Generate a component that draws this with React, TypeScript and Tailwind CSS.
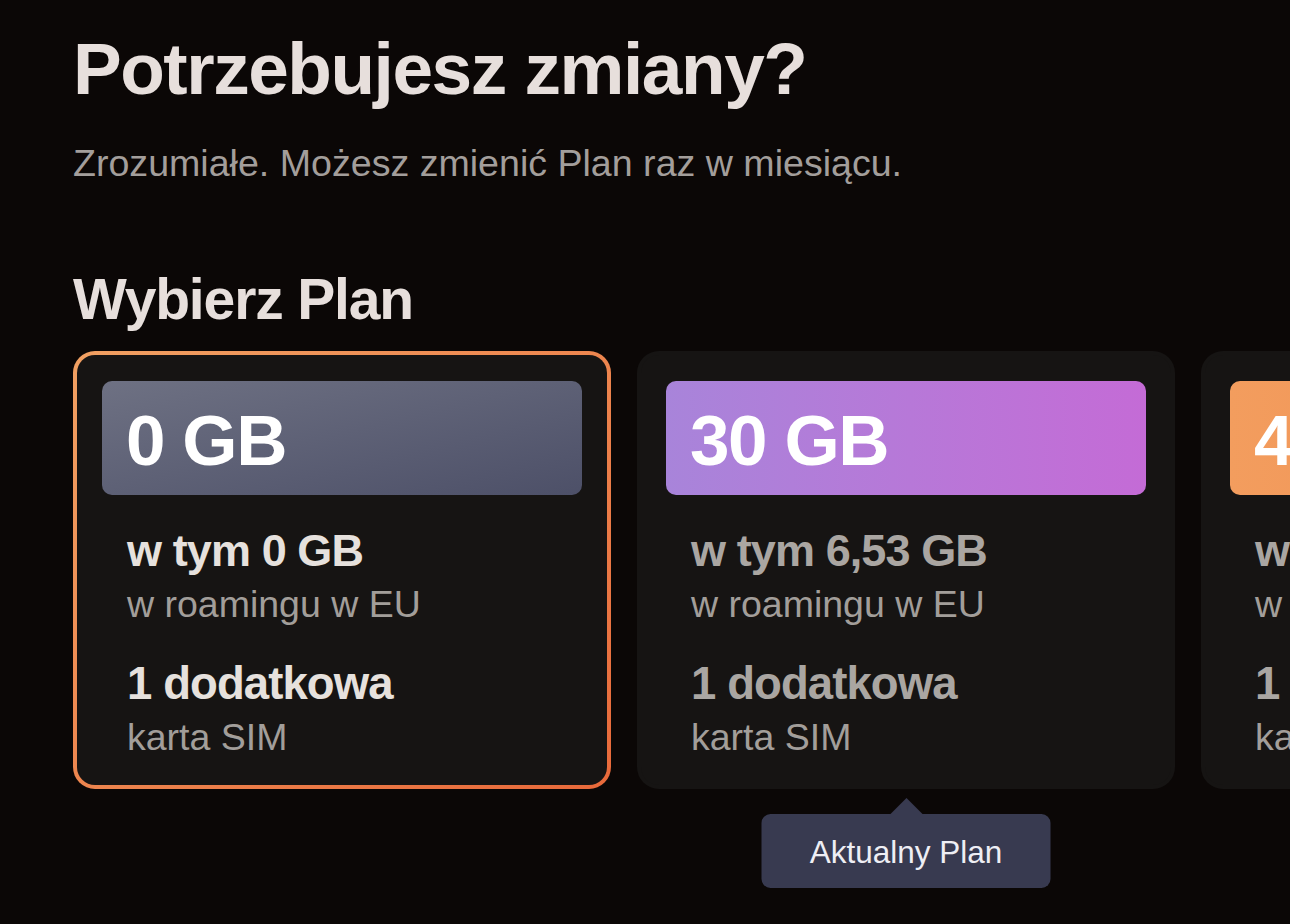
import React from 'react';

type Plan = {
  size: string;
  roaming: string;
  banner: string;
  selected?: boolean;
  current?: boolean;
};

const PLANS: Plan[] = [
  { size: '0 GB', roaming: 'w tym 0 GB', banner: 'bg-gradient-to-br from-[#6e7183] to-[#4d5068]', selected: true },
  { size: '30 GB', roaming: 'w tym 6,53 GB', banner: 'bg-gradient-to-r from-[#a884da] to-[#c46bd6]', current: true },
  { size: '40 GB', roaming: 'w tym 8,71 GB', banner: 'bg-gradient-to-r from-[#f39d5e] to-[#ee8a4e]' },
];

function PlanCard({ plan }: { plan: Plan }) {
  const boldColor = plan.selected ? 'text-[#e6e1dd]' : 'text-[#aaa6a2]';
  return (
    <div className="relative shrink-0">
      <div
        className={
          plan.selected
            ? 'w-[538px] h-[438px] rounded-[22px] p-[4px] bg-gradient-to-br from-[#f1a062] to-[#e8693a]'
            : 'w-[538px] h-[438px] rounded-[22px] p-[4px] bg-[#161413]'
        }
      >
        <div className="h-full rounded-[18px] bg-[#161413] px-[25px] pt-[26px]">
          <div className={`h-[114px] rounded-[10px] pl-[24px] pt-[6px] flex items-center ${plan.banner}`}>
            <span className="text-[71px] font-bold text-white leading-none tracking-[-0.02em]">{plan.size}</span>
          </div>
          <div className="pl-[25px] pt-[32px]">
            <div className={`text-[45px] font-bold leading-[48px] tracking-[-0.02em] ${boldColor}`}>{plan.roaming}</div>
            <div className="text-[37.5px] leading-[58px] text-[#a29e9a]">w roamingu w EU</div>
            <div className={`mt-[27px] text-[45.5px] font-bold leading-[48px] tracking-[-0.02em] ${boldColor}`}>
              1 dodatkowa
            </div>
            <div className="text-[37.5px] leading-[58px] text-[#a29e9a]">karta SIM</div>
          </div>
        </div>
      </div>
      {plan.current && (
        <div className="absolute left-1/2 -translate-x-1/2 top-[463px] flex flex-col items-center">
          <svg width="34" height="17" viewBox="0 0 34 17" className="absolute -top-[16px]">
            <path d="M0 17 L17 0 L34 17 Z" fill="#383a50" />
          </svg>
          <div className="w-[289px] h-[74px] rounded-[9px] bg-[#383a50] pt-[5px] flex items-center justify-center text-[31.5px] text-[#eeeef4]">
            Aktualny Plan
          </div>
        </div>
      )}
    </div>
  );
}

export default function App() {
  return (
    <div
      className="min-h-screen w-full overflow-hidden bg-[#0b0706]"
      style={{ fontFamily: '"Liberation Sans", Arial, sans-serif' }}
    >
      <main className="pl-[73px] pt-[32px]">
        <h1 className="text-[73px] font-bold leading-none tracking-[-0.02em] text-[#e7dfdc]">Potrzebujesz zmiany?</h1>
        <p className="mt-[40px] text-[37.6px] leading-none text-[#a39e9b]">
          Zrozumiałe. Możesz zmienić Plan raz w miesiącu.
        </p>
        <h2 className="mt-[88px] text-[57px] font-bold leading-none tracking-[-0.02em] text-[#e7dfdc]">Wybierz Plan</h2>
        <div className="mt-[23px] flex gap-[26px] pb-[140px]">
          {PLANS.map((p) => (
            <PlanCard key={p.size} plan={p} />
          ))}
        </div>
      </main>
    </div>
  );
}
